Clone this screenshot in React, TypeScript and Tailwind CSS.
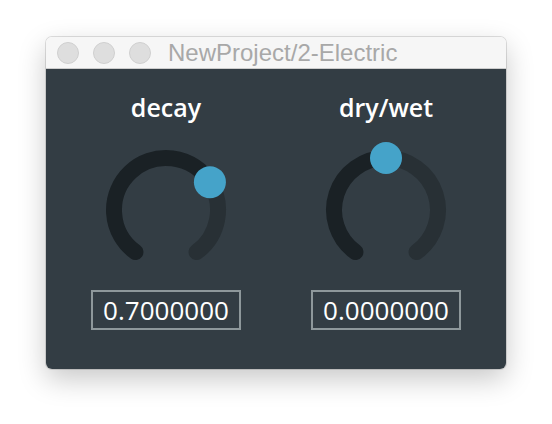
import React from "react";

const R = 52;
const START = -144;
const END = 144;

function pt(a: number) {
  const r = (a * Math.PI) / 180;
  return [68 + R * Math.sin(r), 68 - R * Math.cos(r)];
}

function arc(a0: number, a1: number) {
  const [x0, y0] = pt(a0);
  const [x1, y1] = pt(a1);
  const large = a1 - a0 > 180 ? 1 : 0;
  return `M ${x0.toFixed(2)} ${y0.toFixed(2)} A ${R} ${R} 0 ${large} 1 ${x1.toFixed(2)} ${y1.toFixed(2)}`;
}

function Knob({ pos }: { pos: number }) {
  const a = START + pos * (END - START);
  const [tx, ty] = pt(a);
  return (
    <svg width="136" height="136" viewBox="0 0 136 136" className="block overflow-visible">
      <path d={arc(a, END)} fill="none" stroke="#283035" strokeWidth="16" strokeLinecap="round" />
      <path d={arc(START, a)} fill="none" stroke="#1a2125" strokeWidth="16" strokeLinecap="round" />
      <circle cx={tx} cy={ty} r="16" fill="#45a3c9" />
    </svg>
  );
}

function Control({ label, pos, value }: { label: string; pos: number; value: string }) {
  return (
    <div className="w-[220px] flex flex-col items-center">
      <div className="text-[25px] leading-[30px] font-semibold text-white font-['Open_Sans',sans-serif]">{label}</div>
      <div className="mt-[20px]">
        <Knob pos={pos} />
      </div>
      <div className="mt-[12px] w-[150px] h-[40px] border-2 border-[#8e989b] flex items-center justify-center text-[26px] leading-[36px] text-white font-['Open_Sans',sans-serif]">
        {value}
      </div>
    </div>
  );
}

export default function App() {
  return (
    <div className="w-[552px] h-[424px] bg-white pl-[46px] pt-[37px]">
      <div className="w-[460px] rounded-[6px] overflow-hidden shadow-[0_0_0_1px_rgba(0,0,0,0.12),0_10px_28px_rgba(0,0,0,0.22)]">
        {/* Title bar */}
        <div className="h-[32px] bg-[#f6f6f6] border-b border-[#cdcdcd] flex items-center pl-[11px]">
          <div className="flex gap-[14px]">
            <span className="w-[22px] h-[22px] rounded-full bg-[#dedede] border border-[#cfcfcf]" />
            <span className="w-[22px] h-[22px] rounded-full bg-[#dedede] border border-[#cfcfcf]" />
            <span className="w-[22px] h-[22px] rounded-full bg-[#dedede] border border-[#cfcfcf]" />
          </div>
          <span className="ml-[17px] text-[24px] leading-none text-[#a8a8a8] font-['Liberation_Sans',sans-serif]">
            NewProject/2-Electric
          </span>
        </div>

        {/* Body */}
        <div className="h-[300px] bg-[#333d44] flex justify-center pt-[23px]">
          <Control label="decay" pos={0.7} value="0.7000000" />
          <Control label="dry/wet" pos={0.5} value="0.0000000" />
        </div>
      </div>
    </div>
  );
}
